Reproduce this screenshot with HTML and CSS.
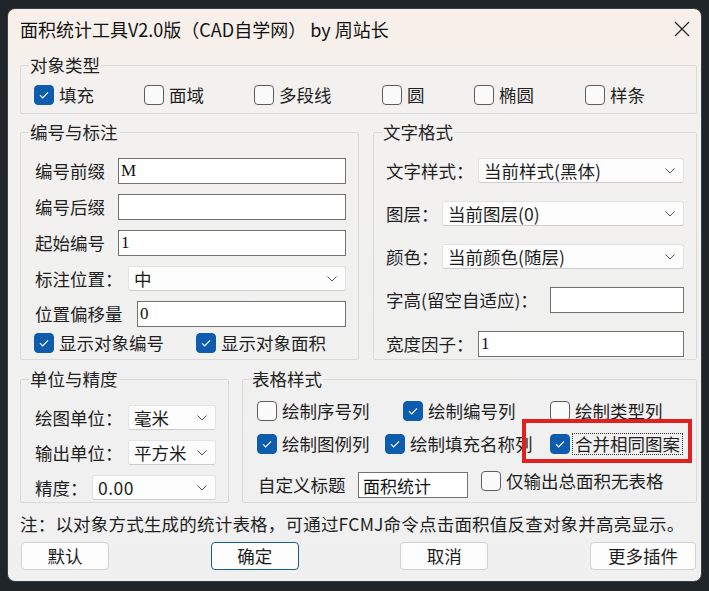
FILE: index.html
```html
<!DOCTYPE html>
<html lang="zh-CN">
<head>
    <meta charset="UTF-8">
    <title>面积统计工具</title>
    <link rel="stylesheet" href="styles.css">
</head>
<body>

    <div class="dialog">
        <!-- Title bar -->
        <div class="titlebar">
            <span class="title">面积统计工具V2.0版（CAD自学网） by 周站长</span>
            <svg class="close" viewBox="0 0 16 16"><path d="M1 1L15 15M15 1L1 15"/></svg>
        </div>

        <div class="content">
            <!-- 对象类型 -->
            <fieldset class="group">
                <legend>对象类型</legend>
                <div class="body types">
                    <label class="check t1"><span class="box on"><svg viewBox="0 0 20 20"><path d="M5.5 10.2l3 3 6-6.2"/></svg></span>填充</label>
                    <label class="check t2"><span class="box"></span>面域</label>
                    <label class="check t3"><span class="box"></span>多段线</label>
                    <label class="check t4"><span class="box"></span>圆</label>
                    <label class="check t5"><span class="box"></span>椭圆</label>
                    <label class="check"><span class="box"></span>样条</label>
                </div>
            </fieldset>

            <div class="group-row mid">
                <!-- 编号与标注 -->
                <fieldset class="group numbering">
                    <legend>编号与标注</legend>
                    <div class="body stack numbering-body">
                        <div class="field"><span class="lbl w83">编号前缀</span><input class="input" value="M"></div>
                        <div class="field"><span class="lbl w83">编号后缀</span><input class="input" value=""></div>
                        <div class="field"><span class="lbl w83">起始编号</span><input class="input" value="1"></div>
                        <div class="field"><span class="lbl w93">标注位置：</span>
                            <div class="select"><span>中</span><svg class="chev" viewBox="0 0 10 6"><path d="M0.5 0.5L5 5L9.5 0.5"/></svg></div>
                        </div>
                        <div class="field"><span class="lbl w102">位置偏移量</span><input class="input" value="0"></div>
                        <div class="checks show-row">
                            <label class="check s1"><span class="box on"><svg viewBox="0 0 20 20"><path d="M5.5 10.2l3 3 6-6.2"/></svg></span>显示对象编号</label>
                            <label class="check"><span class="box on"><svg viewBox="0 0 20 20"><path d="M5.5 10.2l3 3 6-6.2"/></svg></span>显示对象面积</label>
                        </div>
                    </div>
                </fieldset>

                <!-- 文字格式 -->
                <fieldset class="group text-format">
                    <legend>文字格式</legend>
                    <div class="body stack format-body">
                        <div class="field"><span class="lbl w92">文字样式：</span>
                            <div class="select"><span>当前样式(黑体)</span><svg class="chev" viewBox="0 0 10 6"><path d="M0.5 0.5L5 5L9.5 0.5"/></svg></div>
                        </div>
                        <div class="field"><span class="lbl w56">图层：</span>
                            <div class="select"><span>当前图层(0)</span><svg class="chev" viewBox="0 0 10 6"><path d="M0.5 0.5L5 5L9.5 0.5"/></svg></div>
                        </div>
                        <div class="field"><span class="lbl w56">颜色：</span>
                            <div class="select"><span>当前颜色(随层)</span><svg class="chev" viewBox="0 0 10 6"><path d="M0.5 0.5L5 5L9.5 0.5"/></svg></div>
                        </div>
                        <div class="field"><span class="lbl w164">字高(留空自适应)：</span><input class="input" value=""></div>
                        <div class="field"><span class="lbl w92">宽度因子：</span><input class="input" value="1"></div>
                    </div>
                </fieldset>
            </div>

            <div class="group-row low">
                <!-- 单位与精度 -->
                <fieldset class="group units">
                    <legend>单位与精度</legend>
                    <div class="body stack units-body">
                        <div class="field"><span class="lbl w93">绘图单位：</span>
                            <div class="select"><span>毫米</span><svg class="chev" viewBox="0 0 10 6"><path d="M0.5 0.5L5 5L9.5 0.5"/></svg></div>
                        </div>
                        <div class="field"><span class="lbl w93">输出单位：</span>
                            <div class="select"><span>平方米</span><svg class="chev" viewBox="0 0 10 6"><path d="M0.5 0.5L5 5L9.5 0.5"/></svg></div>
                        </div>
                        <div class="field"><span class="lbl w57">精度：</span>
                            <div class="select"><span class="num">0.00</span><svg class="chev" viewBox="0 0 10 6"><path d="M0.5 0.5L5 5L9.5 0.5"/></svg></div>
                        </div>
                    </div>
                </fieldset>

                <!-- 表格样式 -->
                <fieldset class="group table-style">
                    <legend>表格样式</legend>
                    <div class="body table-body">
                        <div class="checks row1">
                            <label class="check c1"><span class="box"></span>绘制序号列</label>
                            <label class="check c2"><span class="box on"><svg viewBox="0 0 20 20"><path d="M5.5 10.2l3 3 6-6.2"/></svg></span>绘制编号列</label>
                            <label class="check"><span class="box"></span>绘制类型列</label>
                        </div>
                        <div class="checks row2">
                            <label class="check c3"><span class="box on"><svg viewBox="0 0 20 20"><path d="M5.5 10.2l3 3 6-6.2"/></svg></span>绘制图例列</label>
                            <label class="check c4"><span class="box on"><svg viewBox="0 0 20 20"><path d="M5.5 10.2l3 3 6-6.2"/></svg></span>绘制填充名称列</label>
                            <label class="check marked"><span class="box on"><svg viewBox="0 0 20 20"><path d="M5.5 10.2l3 3 6-6.2"/></svg></span><span class="focus">合并相同图案</span>
                                <span class="highlight"></span>
                            </label>
                        </div>
                        <div class="row3">
                            <span class="lbl title-lbl">自定义标题</span>
                            <input class="input title-input" value="面积统计">
                            <label class="check only-total"><span class="box"></span>仅输出总面积无表格</label>
                        </div>
                    </div>
                </fieldset>
            </div>

            <p class="note">注：以对象方式生成的统计表格，可通过FCMJ命令点击面积值反查对象并高亮显示。</p>

            <div class="buttons">
                <button class="btn">默认</button>
                <button class="btn primary">确定</button>
                <button class="btn">取消</button>
                <button class="btn wide">更多插件</button>
            </div>
        </div>
    </div>

</body>
</html>
```

FILE: styles.css
```css
body {
    margin: 0;
    height: 591px;
    overflow: hidden;
    background-color: #20252a;
    font-family: "Noto Sans CJK SC", "Noto Sans", sans-serif;
    color: #1f1f1f;
}

/* Window */
.dialog {
    box-sizing: border-box;
    width: 695px;
    height: 574px;
    margin: 8px 0 0 7px;
    border-radius: 8px;
    border: 1px solid #3a3f45;
    background: linear-gradient(180deg, #f8efe9 0, #f6f0eb 40px, #f2f1f0 90px, #f0f0f0 100%);
    overflow: hidden;
}

.titlebar {
    height: 45px;
    display: flex;
    justify-content: space-between;
    align-items: flex-start;
    padding: 9px 11px 0 12px;
    box-sizing: border-box;
}

.title {
    font-size: 18px;
    line-height: 23px;
    color: #111;
}

.close {
    width: 16px;
    height: 16px;
    margin-top: 3px;
    fill: none;
    stroke: #222;
    stroke-width: 1.2;
}

.content {
    padding: 0 4px 0 12px;
}

/* Group boxes */
.group {
    margin: 0;
    padding: 0;
    border: 1px solid #dadada;
    border-radius: 2px;
    min-width: 0;
}

.group legend {
    margin-left: 8px;
    padding: 0 1px;
    font-size: 17.5px;
    line-height: 22px;
    color: #222;
}

.group-row {
    display: flex;
}

.mid {
    margin-top: 7px;
    gap: 14px;
}

.low {
    margin-top: 8px;
    gap: 13px;
}

.numbering { width: 339px; flex: none; box-sizing: border-box; }
.text-format { flex: 1; }
.units { width: 209px; flex: none; box-sizing: border-box; }
.table-style { flex: 1; }

.body {
    font-size: 17.5px;
}

.types {
    display: flex;
    padding: 9px 0 8px 13px;
}

.stack {
    display: flex;
    flex-direction: column;
}

.numbering-body {
    padding: 15px 12px 6px 14px;
    gap: 10px;
}

.format-body {
    padding: 15px 12px 2px 12px;
    gap: 18px;
}

.units-body {
    padding: 15px 12px 2px 14px;
    gap: 10px;
}

.table-body {
    padding: 11px 12px 4px 14px;
}

/* Label + control rows */
.field {
    display: flex;
    align-items: center;
}

.lbl {
    flex: none;
    line-height: 22px;
    white-space: nowrap;
}

.w56 { width: 56px; }
.w57 { width: 57px; }
.w83 { width: 83px; }
.w92 { width: 92px; }
.w93 { width: 93px; }
.w102 { width: 102px; }
.w164 { width: 164px; }

.input {
    flex: 1;
    min-width: 0;
    height: 26px;
    box-sizing: border-box;
    margin: 0;
    padding: 0 2px;
    border: 1px solid #727272;
    border-radius: 0;
    background: #fff;
    font-family: "Liberation Serif", "Noto Sans CJK SC", serif;
    font-size: 17px;
    color: #111;
    outline: none;
}

.select {
    flex: 1;
    height: 25px;
    box-sizing: border-box;
    display: flex;
    align-items: center;
    justify-content: space-between;
    padding: 0 8px 0 5px;
    background: #fdfdfd;
    border: 1px solid #e3e3e3;
    border-bottom-color: #cdcdcd;
    border-radius: 3px;
    font-size: 17.5px;
    line-height: 22px;
    color: #1c1c1c;
}

.select .num {
    letter-spacing: 0.5px;
}

.chev {
    width: 10px;
    height: 6px;
    fill: none;
    stroke: #555;
    stroke-width: 1;
}

/* Checkboxes */
.checks {
    display: flex;
}

.check {
    display: flex;
    align-items: center;
    height: 20px;
    line-height: 22px;
    white-space: nowrap;
    flex: none;
}

.box {
    width: 20px;
    height: 20px;
    box-sizing: border-box;
    margin-right: 5px;
    border: 1px solid #5c5c5c;
    border-radius: 4px;
    background: #fbfbfb;
    flex: none;
}

.box.on {
    border-color: #0d5cae;
    background: #0d5cae;
}

.box svg {
    display: block;
    width: 18px;
    height: 18px;
    fill: none;
    stroke: #fff;
    stroke-width: 1.3;
}

.t1, .t2 { width: 110px; }
.t3 { width: 128px; }
.t4 { width: 92px; }
.t5 { width: 111px; }

.show-row {
    margin-top: -4px;
    margin-left: -1px;
}

.s1 { width: 162px; }

.row1 .c1 { width: 146px; }
.row1 .c2 { width: 147px; }

.row2 {
    margin-top: 13px;
}

.row2 .c3 { width: 128px; }
.row2 .c4 { width: 165px; }

.marked {
    position: relative;
}

.focus {
    padding: 0 2px;
    margin-left: -2px;
    line-height: 20px;
    outline: 1px dotted #333;
}

/* red annotation frame */
.highlight {
    position: absolute;
    left: -28px;
    top: -15px;
    width: 170px;
    height: 44px;
    box-sizing: border-box;
    border: 4px solid #e1211d;
}

.row3 {
    display: flex;
    align-items: center;
    margin-top: 18px;
    height: 26px;
}

.title-lbl {
    width: 100px;
    margin-left: 1px;
}

.title-input {
    flex: none;
    width: 110px;
    padding: 0 4px;
}

.only-total {
    margin-left: 13px;
    margin-top: -8px;
}

/* Footer */
.note {
    margin: 10px 0 0 0;
    font-size: 17.5px;
    line-height: 22px;
    white-space: nowrap;
    letter-spacing: 0.2px;
}

.buttons {
    display: flex;
    justify-content: space-between;
    margin: 7px 1px 0 1px;
}

.btn {
    width: 88px;
    height: 28px;
    padding: 0;
    background: #fdfdfd;
    border: 1px solid #d2d2d2;
    border-radius: 4px;
    font-family: "Noto Sans CJK SC", sans-serif;
    font-size: 17.5px;
    line-height: 22px;
    color: #1c1c1c;
}

.btn.primary {
    border-color: #1d5a8c;
}

.btn.wide {
    width: 106px;
}
```
